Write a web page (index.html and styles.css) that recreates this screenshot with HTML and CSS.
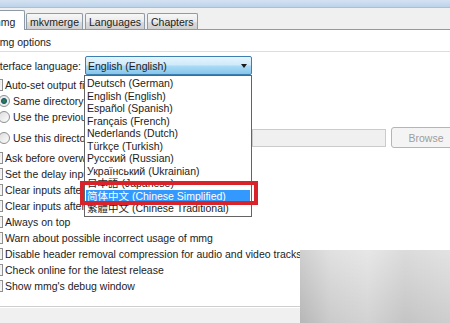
FILE: index.html
```html
<!DOCTYPE html>
<html lang="en">
  <head>
    <meta charset="UTF-8" />
    <title>mmg preferences</title>
    <link rel="stylesheet" href="styles.css">
  </head>
  <body>
    <div class="screen">
      <div class="window">
        <div class="titlebar"></div>

        <div class="tabbar">
          <span class="tab active">mmg</span>
          <span class="tab">mkvmerge</span>
          <span class="tab">Languages</span>
          <span class="tab">Chapters</span>
        </div>

        <div class="page">
          <div class="group-title">mmg options</div>

          <div class="group">
            <div class="lang-row">
              <span class="lang-label">Interface language:</span>
              <div class="combo">
                <span class="combo-text">English (English)</span>
                <span class="combo-arrow"></span>
              </div>
            </div>

            <div class="opt"><span class="check"></span>Auto-set output filename</div>
            <div class="opt sub"><span class="radio checked"></span>Same directory as the first input file</div>
            <div class="opt sub"><span class="radio"></span>Use the previous output directory</div>
            <div class="dir-row">
              <div class="opt sub dir-label"><span class="radio"></span>Use this directory:</div>
              <div class="dir-field"></div>
              <button class="btn" disabled>Browse</button>
            </div>
            <div class="opt first"><span class="check"></span>Ask before overwriting things (files, jobs)</div>
            <div class="opt"><span class="check"></span>Set the delay input field from the file name</div>
            <div class="opt"><span class="check"></span>Clear inputs after a successful muxing run</div>
            <div class="opt"><span class="check"></span>Clear inputs after adding a job to the job queue</div>
            <div class="opt"><span class="check"></span>Always on top</div>
            <div class="opt"><span class="check"></span>Warn about possible incorrect usage of mmg</div>
            <div class="opt"><span class="check"></span>Disable header removal compression for audio and video tracks by default</div>
            <div class="opt"><span class="check"></span>Check online for the latest release</div>
            <div class="opt"><span class="check"></span>Show mmg's debug window</div>
          </div>
        </div>
      </div>

      <!-- open combobox list -->
      <ul class="dropdown">
        <li>Deutsch (German)</li>
        <li>English (English)</li>
        <li>Español (Spanish)</li>
        <li>Français (French)</li>
        <li>Nederlands (Dutch)</li>
        <li>Türkçe (Turkish)</li>
        <li>Русский (Russian)</li>
        <li>Український (Ukrainian)</li>
        <li lang="ja">日本語 (Japanese)</li>
        <li lang="zh-Hans" class="selected">简体中文 (Chinese Simplified)</li>
        <li lang="zh-Hant">繁體中文 (Chinese Traditional)</li>
      </ul>

      <div class="callout"></div>
      <div class="watermark"></div>
    </div>
  </body>
</html>
```

FILE: styles.css
```css
* {
  margin: 0;
  padding: 0;
  box-sizing: border-box;
}

body {
  font-family: "Liberation Sans", "Noto Sans CJK SC", sans-serif;
  font-size: 10.5px;
  color: #1c1c1c;
  background: #f0f0f0;
}

.screen {
  position: relative;
  width: 450px;
  height: 323px;
  overflow: hidden;
  background: #f0f0f0;
}

.window {
  margin-left: -9px;
  width: 500px;
}

.titlebar {
  height: 8px;
  background: linear-gradient(#d3e2f1, #bcd2e9);
  border-bottom: 1px solid #a9c0d8;
}

.tabbar {
  display: flex;
  align-items: flex-end;
  gap: 2px;
  height: 22px;
  background: #f0f0f0;
  border-bottom: 1px solid #8e9aa6;
}

.tab {
  height: 16px;
  padding: 1px 3px 0;
  line-height: 15px;
  border: 1px solid #8e9aa6;
  border-bottom: none;
  border-radius: 2px 2px 0 0;
  background: linear-gradient(#f7f7f7, #ebebeb 50%, #dddddd 51%, #cfcfcf);
  white-space: nowrap;
}

.tab.active {
  position: relative;
  width: 37px;
  height: 20px;
  padding: 3px 3px 0;
  line-height: 16px;
  margin: 0 -1px -1px -3px;
  background: #fff;
}

.page {
  background: #fff;
  padding-bottom: 12px;
  border-bottom: 1px solid #cfcfcf;
  box-shadow: 0 1px 0 #fff;
}

.group-title {
  height: 21px;
  padding-top: 5px;
  line-height: 14px;
}

.group {
  border-top: 1px solid #d5dfe5;
}

.lang-row {
  display: flex;
  align-items: center;
  height: 19px;
  margin-top: 4px;
  margin-bottom: 2px;
}

.lang-label {
  width: 94px;
  white-space: nowrap;
}

.combo {
  display: flex;
  align-items: center;
  justify-content: space-between;
  width: 167px;
  height: 19px;
  padding: 0 4px 0 2px;
  border: 1px solid #3c7fb1;
  border-radius: 2px;
  background: linear-gradient(#e7f5fd, #cfeafa 45%, #a9daf5 55%, #86c6ea);
}

.combo-arrow {
  width: 0;
  height: 0;
  border-left: 3.5px solid transparent;
  border-right: 3.5px solid transparent;
  border-top: 4px solid #1a1a1a;
}

.opt {
  display: flex;
  align-items: center;
  gap: 2px;
  height: 16px;
  white-space: nowrap;
}

.opt.sub {
  padding-left: 7px;
  gap: 3px;
}

.opt.first {
  margin-top: 2px;
}

.check {
  flex: none;
  width: 12px;
  height: 12px;
  border: 1px solid #8f8f8f;
  background: linear-gradient(135deg, #dedede, #fbfbfb);
  box-shadow: inset 0 0 0 1px #f4f4f4;
}

.radio {
  flex: none;
  width: 12px;
  height: 12px;
  border: 1px solid #8f8f8f;
  border-radius: 50%;
  background: linear-gradient(135deg, #dcdcdc, #fdfdfd);
}

.radio.checked {
  background: radial-gradient(circle, #3a8a3c 0, #1f5e6e 2.5px, #eaeaea 3.5px, #f7f7f7);
}

.dir-row {
  display: flex;
  align-items: center;
  height: 21px;
  margin-top: 2px;
}

.dir-label {
  width: 261px;
}

.dir-field {
  width: 134px;
  height: 18px;
  border: 1px solid #cbcbcb;
  background: #f0f0f0;
}

.btn {
  width: 70px;
  height: 21px;
  margin-left: 5px;
  border: 1px solid #b5b5b5;
  border-radius: 3px;
  background: #f4f4f4;
  color: #9d9d9d;
  font: inherit;
}

.dropdown {
  position: absolute;
  left: 84px;
  top: 75px;
  width: 168px;
  padding: 1px 0;
  list-style: none;
  background: #fff;
  border: 1px solid #646464;
}

.dropdown li {
  height: 12.5px;
  line-height: 12.5px;
  padding-left: 2px;
  white-space: nowrap;
}

.dropdown li[lang="ja"] {
  font-family: "Liberation Sans", "Noto Sans CJK JP", sans-serif;
}

.dropdown li[lang="zh-Hant"] {
  font-family: "Liberation Sans", "Noto Sans CJK TC", sans-serif;
}

.dropdown li.selected {
  margin: 0 1px;
  padding-left: 1px;
  background: #3399ff;
  color: #fff;
}

.callout {
  position: absolute;
  left: 80px;
  top: 181px;
  width: 178px;
  height: 24px;
  border: 4px solid #d8232a;
}

/* blurred gray stamp in the bottom right corner */
.watermark {
  position: absolute;
  left: 300px;
  top: 250px;
  width: 150px;
  height: 73px;
  background: linear-gradient(90deg, #bfbfbf, #d6d6d6 20%, #dfdfdf 45%, #cfcfcf 70%, #d9d9d9);
}

.watermark::after {
  content: "";
  position: absolute;
  inset: 0;
  background: linear-gradient(rgba(255, 255, 255, 0.25), rgba(120, 120, 120, 0.12));
}
```
